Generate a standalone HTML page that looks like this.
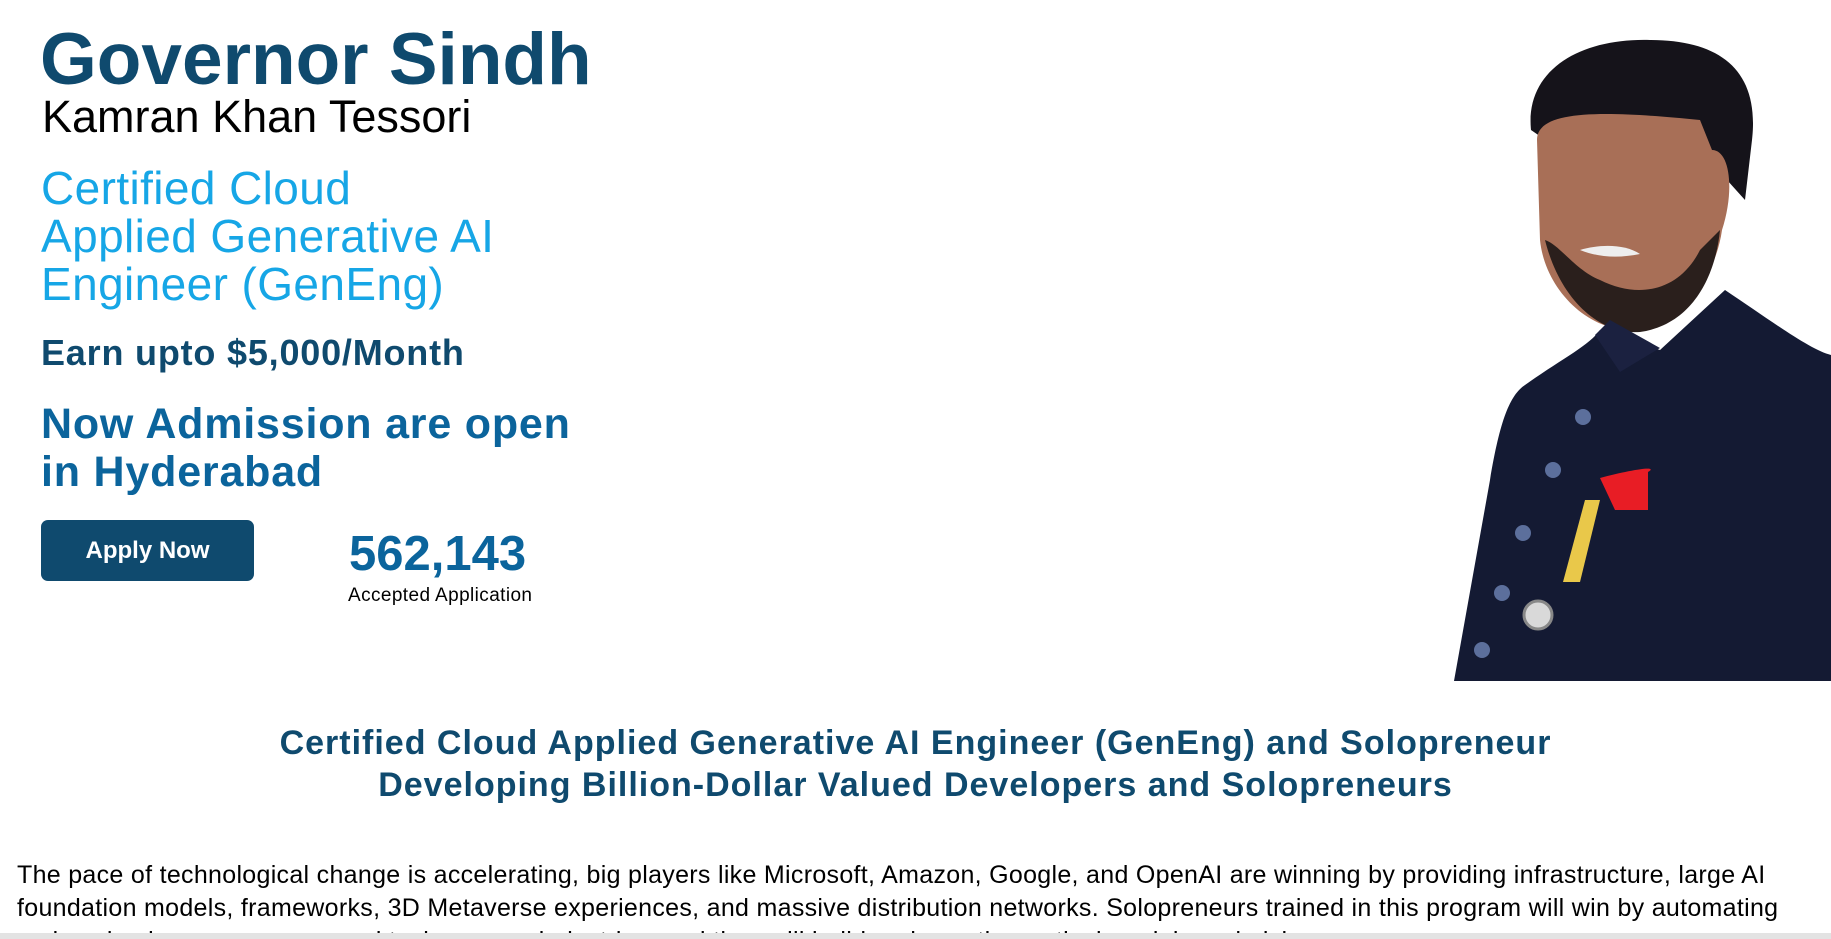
<!DOCTYPE html>
<html><head><meta charset="utf-8"><style>
html,body{margin:0;padding:0;background:#fff;width:1831px;height:939px;overflow:hidden;font-family:"Liberation Sans",Arial,sans-serif;}
.a{position:absolute;white-space:nowrap;}
</style></head><body>
<div class="a" style="left:40px;top:15px;font-size:73px;font-weight:bold;color:#0f4a6e;line-height:90px;">Governor Sindh</div>
<div class="a" style="left:42px;top:91px;font-size:45px;color:#000;line-height:52px;">Kamran Khan Tessori</div>
<div class="a" style="left:41px;top:164px;font-size:46px;color:#16a6e6;line-height:48px;letter-spacing:0.4px;">Certified Cloud<br>Applied Generative AI<br>Engineer (GenEng)</div>
<div class="a" style="left:41px;top:333px;font-size:36px;font-weight:bold;color:#0f4a6e;line-height:40px;letter-spacing:0.8px;">Earn upto $5,000/Month</div>
<div class="a" style="left:41px;top:400px;font-size:43px;font-weight:bold;color:#0b649c;line-height:48px;letter-spacing:0.8px;">Now Admission are open<br>in Hyderabad</div>
<div class="a" style="left:41px;top:520px;width:213px;height:61px;background:#0f4a6e;border-radius:7px;color:#fff;font-size:24px;font-weight:bold;line-height:61px;text-align:center;">Apply Now</div>
<div class="a" style="left:349px;top:526px;font-size:49px;font-weight:bold;color:#0b649c;line-height:56px;">562,143</div>
<div class="a" style="left:348px;top:584px;font-size:19px;color:#000;line-height:24px;letter-spacing:0.4px;">Accepted Application</div>

<svg class="a" style="left:1440px;top:30px" width="391" height="652" viewBox="1440 30 391 652">
<path d="M1531 130 C1525 70 1580 38 1650 40 C1720 40 1760 70 1752 140 L1745 200 L1700 150 L1560 150 Z" fill="#15131a"/>
<path d="M1537 140 C1537 110 1600 110 1700 120 L1712 150 C1730 150 1735 190 1722 230 C1715 280 1680 320 1640 330 C1590 335 1545 290 1540 240 Z" fill="#a86f57"/>
<path d="M1545 240 C1560 300 1600 335 1640 332 C1690 325 1715 280 1720 230 L1700 250 C1680 290 1640 300 1600 280 C1575 270 1560 245 1545 240 Z" fill="#2a1f1c"/>
<path d="M1580 250 C1600 244 1625 244 1640 254 C1620 258 1600 258 1580 250 Z" fill="#eee"/>
<path d="M1454 681 L1490 480 C1500 420 1510 395 1525 385 C1560 360 1590 345 1600 330 L1660 350 L1725 290 C1770 320 1810 350 1831 355 L1831 681 Z" fill="#141a33"/>
<path d="M1595 335 L1610 320 L1660 348 L1620 372 Z" fill="#1b2140"/>
<g fill="#5c6f9c">
<circle cx="1583" cy="417" r="8"/><circle cx="1553" cy="470" r="8"/><circle cx="1523" cy="533" r="8"/><circle cx="1502" cy="593" r="8"/><circle cx="1482" cy="650" r="8"/>
</g>
<path d="M1600 478 C1630 470 1660 465 1648 472 L1648 510 L1615 510 Z" fill="#e81d25"/>
<path d="M1585 500 L1600 500 L1580 582 L1563 582 Z" fill="#e9c84a"/>
<circle cx="1538" cy="615" r="14" fill="#d9d9d9" stroke="#888" stroke-width="3"/>
</svg>

<div class="a" style="left:0;width:1831px;top:722px;text-align:center;font-size:34px;font-weight:bold;color:#0f4a6e;line-height:42px;letter-spacing:1px;">Certified Cloud Applied Generative AI Engineer (GenEng) and Solopreneur<br>Developing Billion-Dollar Valued Developers and Solopreneurs</div>
<div class="a" style="left:17px;top:859px;width:1800px;height:74px;overflow:hidden;white-space:normal;font-size:25px;color:#000;line-height:33px;letter-spacing:0.3px;">The pace of technological change is accelerating, big players like Microsoft, Amazon, Google, and OpenAI are winning by providing infrastructure, large AI foundation models, frameworks, 3D Metaverse experiences, and massive distribution networks. Solopreneurs trained in this program will win by automating various business processes and tasks across industries, and they will build and own the vertical models and niche apps.</div>
<div class="a" style="left:0;top:933px;width:1831px;height:6px;background:#e3e3e3;"></div>
</body></html>
